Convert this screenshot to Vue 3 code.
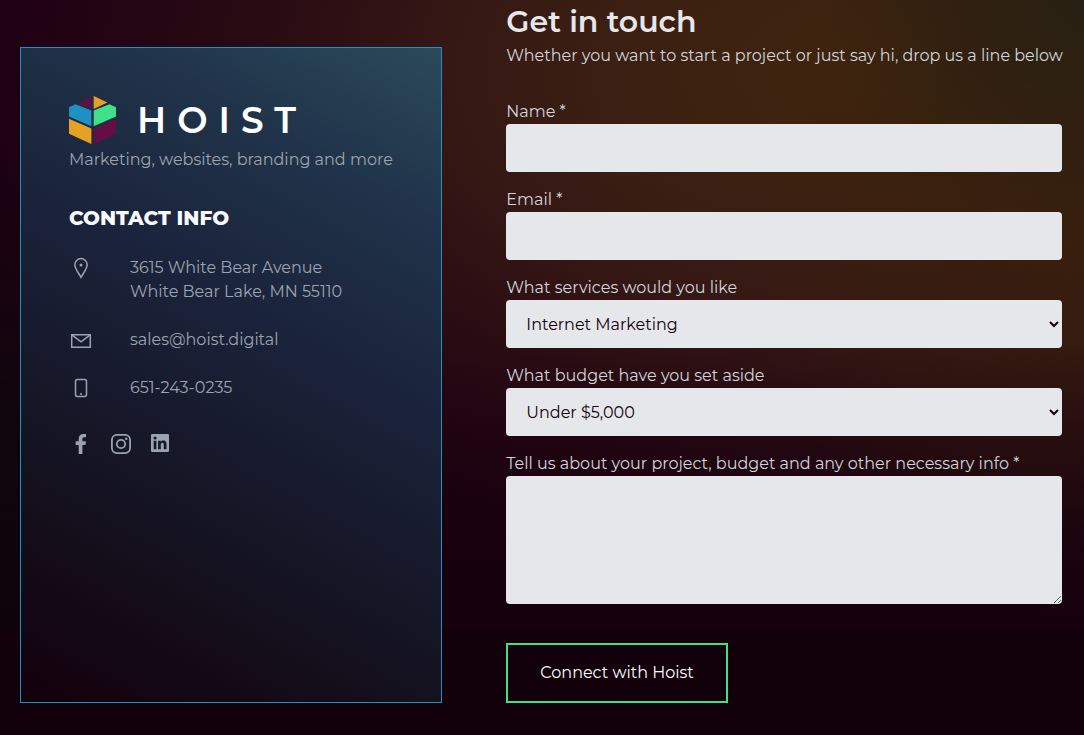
<template>
  <main class="page">
    <div class="contact">
      <section class="card">
        <div class="brand">
          <svg class="brand__mark" viewBox="0 0 47 48" aria-hidden="true">
            <path fill="#650e45" d="M22.4 0.200v12.400L9 7.400z" />
            <path fill="#e6a023" d="M24.700 0v13l13.700-6.600z" />
            <path fill="#1e90c4" d="M0 11.300 6.500 8.200l15.900 6.400v15.600L0 20.600z" />
            <path fill="#3fe08a" d="M47 11.300 40.500 8.200l-15.800 6.400v15.600L47 20.600z" />
            <path fill="#e6a023" d="M0 22.800l22.400 9.600V48L0 37.800z" />
            <path fill="#650e45" d="M47 22.800l-22.300 9.600V48L47 37.800z" />
          </svg>
          <span class="brand__name">HOIST</span>
        </div>
        <p class="card__tagline">Marketing, websites, branding and more</p>

        <h3 class="card__heading">CONTACT INFO</h3>

        <ul class="details">
          <li class="details__row">
            <svg class="icon" viewBox="0 0 24 24" aria-hidden="true">
              <path class="icon__line" d="M12 21.400C10 17.300 5.800 13 5.800 8.800a6.200 6.200 0 0 1 12.400 0C18.200 13 14 17.300 12 21.400z" />
              <circle cx="12" cy="9" r="1.500" fill="currentColor" />
            </svg>
            <address class="details__text">3615 White Bear Avenue<br />White Bear Lake, MN 55110</address>
          </li>
          <li class="details__row">
            <svg class="icon" viewBox="0 0 24 24" aria-hidden="true">
              <path class="icon__line" d="M2.700 6.700h18.600v12.600H2.700z" />
              <path class="icon__line" d="M3.200 7.200 12 13.800l8.800-6.600" />
            </svg>
            <a class="details__text" href="mailto:sales@hoist.digital">sales@hoist.digital</a>
          </li>
          <li class="details__row">
            <svg class="icon" viewBox="0 0 24 24" aria-hidden="true">
              <rect class="icon__line" x="6.500" y="3.600" width="11" height="16.800" rx="1.800" />
              <circle cx="12" cy="18" r="1" fill="currentColor" />
            </svg>
            <a class="details__text" href="tel:651-243-0235">651-243-0235</a>
          </li>
        </ul>

        <nav class="social">
          <a href="#" aria-label="Facebook">
            <svg class="icon" viewBox="0 0 24 24" aria-hidden="true">
              <path fill="currentColor" d="M13.400 22v-9.100h3.060l.460-3.560H13.400V7.070c0-1.030.290-1.730 1.770-1.730h1.880V2.150C16.720 2.110 15.600 2 14.300 2c-2.720 0-4.580 1.660-4.580 4.710v2.630H6.650v3.560h3.070V22z" />
            </svg>
          </a>
          <a href="#" aria-label="Instagram">
            <svg class="icon" viewBox="0 0 24 24" aria-hidden="true">
              <rect x="2.900" y="2.900" width="18.200" height="18.200" rx="5" fill="none" stroke="currentColor" stroke-width="1.800" />
              <circle cx="12" cy="12" r="4.200" fill="none" stroke="currentColor" stroke-width="1.800" />
              <circle cx="17.300" cy="6.700" r="1.200" fill="currentColor" />
            </svg>
          </a>
          <a href="#" aria-label="LinkedIn">
            <svg class="icon" viewBox="0.5 0 24 24" aria-hidden="true">
              <path fill="currentColor" fill-rule="evenodd" d="M4 2h15.300A1.200 1.200 0 0 1 20.500 3.200v15.600a1.200 1.200 0 0 1-1.200 1.200H3.700a1.200 1.200 0 0 1-1.200-1.200V3.200A1.200 1.200 0 0 1 3.700 2zM5.200 8.700v8.600h2.700V8.700zM6.550 4.500a1.550 1.550 0 1 0 0 3.100 1.550 1.550 0 0 0 0-3.100zM9.600 8.700v8.600h2.700v-4.300c0-1.100.2-2.200 1.600-2.200s1.400 1.300 1.400 2.300v4.200H18v-4.700c0-2.300-.5-4.100-3.200-4.100-1.300 0-2.200.7-2.500 1.400V8.700z" />
            </svg>
          </a>
        </nav>
      </section>

      <section class="enquiry">
        <h2 class="enquiry__title">Get in touch</h2>
        <p class="enquiry__intro">Whether you want to start a project or just say hi, drop us a line below</p>

        <form class="form" @submit.prevent>
          <div class="field">
            <label for="name">Name *</label>
            <input id="name" v-model="form.name" class="field__control" type="text" required />
          </div>
          <div class="field">
            <label for="email">Email *</label>
            <input id="email" v-model="form.email" class="field__control" type="email" required />
          </div>
          <div class="field">
            <label for="service">What services would you like</label>
            <select id="service" v-model="form.service" class="field__control field__control--select">
              <option v-for="service in services" :key="service">{{ service }}</option>
            </select>
          </div>
          <div class="field">
            <label for="budget">What budget have you set aside</label>
            <select id="budget" v-model="form.budget" class="field__control field__control--select">
              <option v-for="budget in budgets" :key="budget">{{ budget }}</option>
            </select>
          </div>
          <div class="field">
            <label for="message">Tell us about your project, budget and any other necessary info *</label>
            <textarea id="message" v-model="form.message" class="field__control field__control--area" required></textarea>
          </div>
          <button type="submit" class="submit">Connect with Hoist</button>
        </form>
      </section>
    </div>
  </main>
</template>

<script setup>
import { reactive } from 'vue'

const services = ['Internet Marketing']
const budgets = ['Under $5,000']

const form = reactive({
  name: '',
  email: '',
  service: services[0],
  budget: budgets[0],
  message: '',
})
</script>

<style>
body {
  margin: 0;
  background: #12000b;
}
</style>

<style scoped>
.page {
  box-sizing: border-box;
  min-height: 100vh;
  padding: 4px 22px 32px 20px;
  background:
    linear-gradient(180deg, transparent 0, transparent 630px, #12000b 630px),
    linear-gradient(180deg, transparent 0, transparent 340px, rgba(18, 0, 11, 0.7) 630px),
    radial-gradient(ellipse 260px 240px at 100% 0, #272012 0%, rgba(39, 32, 18, 0) 100%),
    radial-gradient(ellipse 340px 400px at 100% 240px, rgba(56, 32, 12, 0.8) 0%, rgba(56, 32, 12, 0) 100%),
    radial-gradient(ellipse 880px 520px at 80% 70px, #3f250d 0%, #3b1f12 30%, #341614 50%, rgba(42, 12, 19, 0.85) 70%, rgba(30, 0, 18, 0) 100%),
    linear-gradient(90deg, rgba(30, 0, 18, 0) 0, #1e0012 460px),
    linear-gradient(180deg, #200014 0, #1e0012 120px, #080a0b 600px);
  color: #d1d5db;
  font-family: Montserrat, Inter, 'Liberation Sans', sans-serif;
  font-size: 16px;
  line-height: 24px;
}

.contact {
  display: grid;
  grid-template-columns: minmax(0, 19fr) minmax(0, 25fr);
  gap: 64px;
}

.card {
  margin-top: 43px;
  padding: 48px;
  border: 1px solid #1e90c4;
  background: linear-gradient(29deg, #13000b 0%, #14111e 26%, #1a233b 58%, #20334a 80%, #2c4a5a 100%);
  color: #9ca3af;
}

.brand {
  display: flex;
  align-items: center;
  gap: 21px;
}

.brand__mark {
  width: 47px;
  height: 48px;
}

.brand__name {
  color: #ffffff;
  font-size: 36px;
  font-weight: 600;
  line-height: 48px;
  letter-spacing: 11px;
}

.card__tagline {
  margin: 4px 0 0;
}

.card__heading {
  margin: 32px 0 0;
  color: #f9fafb;
  font-size: 20px;
  font-weight: 800;
  line-height: 28px;
}

.details {
  display: grid;
  gap: 24px;
  margin: 24px 0 0;
  padding: 0;
  list-style: none;
}

.details__row {
  display: grid;
  grid-template-columns: 24px 1fr;
  gap: 37px;
}

.details__text {
  color: inherit;
  font-style: normal;
  text-decoration: none;
}

.icon {
  display: block;
  width: 24px;
  height: 24px;
}

.icon__line {
  fill: none;
  stroke: currentColor;
  stroke-width: 1.5;
}

.social {
  display: flex;
  gap: 16px;
  margin-top: 32px;
}

.social a {
  color: inherit;
}

.enquiry__title {
  margin: 0;
  color: #e5e7eb;
  font-size: 30px;
  font-weight: 600;
  line-height: 36px;
}

.enquiry__intro {
  margin: 4px 0 0;
  white-space: nowrap;
}

.form {
  display: grid;
  gap: 16px;
  margin-top: 32px;
}

.field {
  display: grid;
}

.field__control {
  box-sizing: border-box;
  width: 100%;
  height: 48px;
  padding: 0 16px;
  border: 0;
  border-radius: 4px;
  background: #e5e7eb;
  color: #12000b;
  font: inherit;
}

.field__control--select {
  padding-right: 0;
}

.field__control--area {
  height: 128px;
  padding: 12px 16px;
  resize: vertical;
}

.submit {
  justify-self: start;
  height: 60px;
  margin-top: 23px;
  padding: 0 32px;
  border: 2px solid #3fe08a;
  background: transparent;
  color: #ffffff;
  font: inherit;
  cursor: pointer;
}

@media (max-width: 1040px) {
  .enquiry__intro {
    white-space: normal;
  }
}

@media (max-width: 760px) {
  .contact {
    grid-template-columns: minmax(0, 1fr);
  }
}
</style>
